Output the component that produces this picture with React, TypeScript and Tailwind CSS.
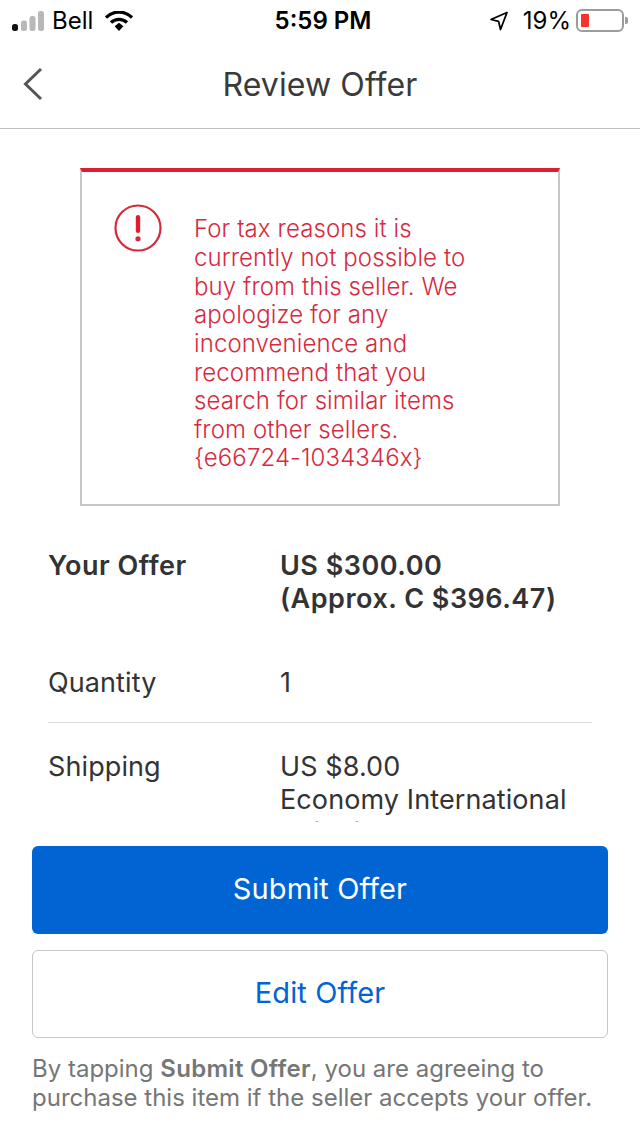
const font = { fontFamily: "Inter, 'Liberation Sans', sans-serif" };

function Signal() {
  return (
    <svg width="34" height="20" viewBox="0 0 34 20" className="block">
      <rect x="0" y="13" width="6" height="7" rx="2.5" fill="#111" />
      <rect x="9" y="9.5" width="6" height="10.5" rx="2.5" fill="#b8b8b8" />
      <rect x="17.5" y="5" width="6" height="15" rx="2.5" fill="#b8b8b8" />
      <rect x="26" y="0" width="6" height="20" rx="2.5" fill="#b8b8b8" />
    </svg>
  );
}

function Wifi() {
  return (
    <svg width="28" height="20" viewBox="0 0 28 20" className="block">
      <path d="M1 6.5C8.5 -0.8 19.5 -0.8 27 6.5" fill="none" stroke="#000" strokeWidth="3.2" />
      <path d="M6 11.5C10.5 7.3 17.5 7.3 22 11.5" fill="none" stroke="#000" strokeWidth="3.2" />
      <path d="M9.6 15.2L14 11.8L18.4 15.2L14 20Z" fill="#000" />
    </svg>
  );
}

function Location() {
  return (
    <svg width="20" height="20" viewBox="0 0 20 20" className="block">
      <path d="M18 1.5L2 8.5L9.6 10.4L11.5 18.5Z" fill="none" stroke="#000" strokeWidth="1.8" strokeLinejoin="round" />
    </svg>
  );
}

function Battery() {
  return (
    <div className="flex items-center">
      <div className="w-[48px] h-[23px] rounded-[6px] border-2 border-[#9c9c9c] p-[3px] bg-white">
        <div className="w-[8px] h-full bg-[#f5352b] rounded-[1px]" />
      </div>
      <div className="w-[3px] h-[7px] bg-[#9c9c9c] rounded-r-[2px] ml-[1px]" />
    </div>
  );
}

function Row({ label, children, bold, className }: { label: string; children: React.ReactNode; bold?: boolean; className?: string }) {
  return (
    <div className={`flex text-[27px] leading-[33px] ${bold ? "font-semibold tracking-[0.5px]" : "tracking-[0.1px]"} ${className ?? ""}`}>
      <div className="w-[232px] shrink-0">{label}</div>
      <div className="flex-1">{children}</div>
    </div>
  );
}

export default function App() {
  return (
    <div style={font} className="w-[640px] h-[1136px] bg-white flex flex-col overflow-hidden text-[#333]">
      <div className="h-[40px] shrink-0 relative flex items-center justify-between pl-[12px] pr-[12px] text-black text-[24px] pt-[1px]">
        <div className="flex items-center">
          <Signal />
          <span className="ml-[6px]">Bell</span>
          <span className="ml-[12px]"><Wifi /></span>
        </div>
        <div className="flex items-center">
          <Location />
          <span className="ml-[14px] mr-[5px]">19%</span>
          <Battery />
        </div>
        <div className="absolute inset-0 pl-[6px] pt-[1px] flex items-center justify-center font-semibold">5:59 PM</div>
      </div>

      <div className="h-[89px] shrink-0 border-b border-[#bdbdbd] relative flex items-center justify-center">
        <svg width="24" height="36" viewBox="0 0 24 36" className="absolute left-[21px] top-[26px]">
          <path d="M20 3L4.5 18L20 33" fill="none" stroke="#555" strokeWidth="3" />
        </svg>
        <span className="text-[32px] tracking-[0.1px] text-[#3a3a3a] relative top-[1px]">Review Offer</span>
      </div>

      <div className="h-[693px] shrink-0 overflow-hidden px-[48px] pt-[39px]">
        <div className="mx-[32px] h-[338px] border-2 border-[#c6c6c6] border-t-[4px] border-t-[#dd1e31] flex items-start pl-[31px] pt-[38px]">
          <svg width="50" height="50" viewBox="0 0 50 50" className="shrink-0 -mt-[7px]">
            <circle cx="25" cy="25" r="22.5" fill="none" stroke="#d42a3e" strokeWidth="2.2" />
            <rect x="22.8" y="12" width="4.4" height="18" rx="2.2" fill="#dd1e31" />
            <circle cx="25" cy="35.8" r="2.6" fill="#d42a3e" />
          </svg>
          <p className="ml-[31px] mt-[5.4px] w-[290px] text-[24px] font-light tracking-[0.1px] leading-[28.625px] text-[#d62a40]">
            For tax reasons it is currently not possible to buy from this seller. We apologize for any inconvenience and recommend that you search for similar items from other sellers. {"{e66724-1034346x}"}
          </p>
        </div>

        <Row label="Your Offer" bold className="mt-[43px]">
          US $300.00<br />(Approx. C $396.47)
        </Row>
        <Row label="Quantity" className="mt-[51px]">1</Row>
        <div className="h-px bg-[#dddddd] mt-[23px]" />
        <Row label="Shipping" className="mt-[27px]">
          US $8.00<br />Economy International Shipping
        </Row>
      </div>

      <div className="px-[32px] pt-[24px]">
        <button className="w-full h-[88px] rounded-[6px] bg-[#0064d2] text-white text-[29px] tracking-[0.1px] pb-[2px]">Submit Offer</button>
        <button className="w-full h-[88px] mt-[16px] rounded-[6px] border border-[#c6c6c6] bg-white text-[#0064d2] text-[29px] tracking-[0.1px] pb-[2px]">Edit Offer</button>
        <p className="mt-[17px] text-[24px] leading-[28.5px] text-[#767676]">
          By tapping <span className="font-semibold tracking-[0.3px]">Submit Offer</span>, you are agreeing to purchase this item if the seller accepts your offer.
        </p>
      </div>
    </div>
  );
}
